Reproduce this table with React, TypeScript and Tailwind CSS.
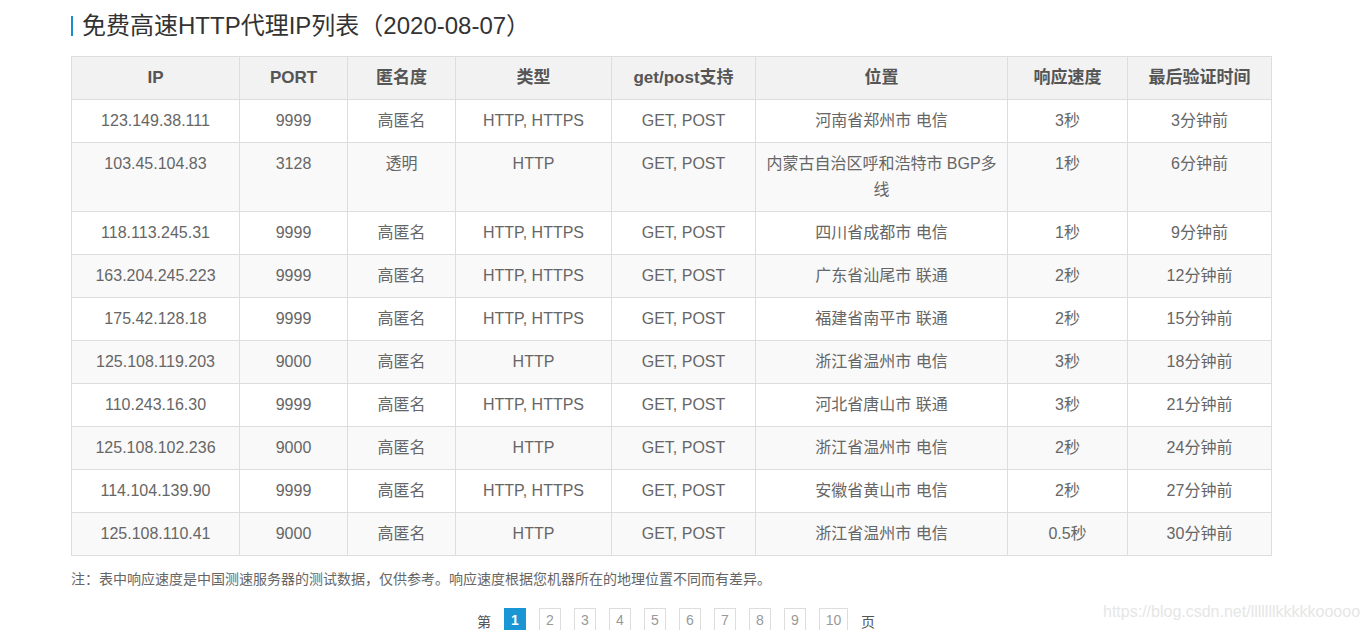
const rows = [
  ["123.149.38.111", "9999", "高匿名", "HTTP, HTTPS", "GET, POST", "河南省郑州市 电信", "3秒", "3分钟前"],
  ["103.45.104.83", "3128", "透明", "HTTP", "GET, POST", "内蒙古自治区呼和浩特市 BGP多线", "1秒", "6分钟前"],
  ["118.113.245.31", "9999", "高匿名", "HTTP, HTTPS", "GET, POST", "四川省成都市 电信", "1秒", "9分钟前"],
  ["163.204.245.223", "9999", "高匿名", "HTTP, HTTPS", "GET, POST", "广东省汕尾市 联通", "2秒", "12分钟前"],
  ["175.42.128.18", "9999", "高匿名", "HTTP, HTTPS", "GET, POST", "福建省南平市 联通", "2秒", "15分钟前"],
  ["125.108.119.203", "9000", "高匿名", "HTTP", "GET, POST", "浙江省温州市 电信", "3秒", "18分钟前"],
  ["110.243.16.30", "9999", "高匿名", "HTTP, HTTPS", "GET, POST", "河北省唐山市 联通", "3秒", "21分钟前"],
  ["125.108.102.236", "9000", "高匿名", "HTTP", "GET, POST", "浙江省温州市 电信", "2秒", "24分钟前"],
  ["114.104.139.90", "9999", "高匿名", "HTTP, HTTPS", "GET, POST", "安徽省黄山市 电信", "2秒", "27分钟前"],
  ["125.108.110.41", "9000", "高匿名", "HTTP", "GET, POST", "浙江省温州市 电信", "0.5秒", "30分钟前"],
];

const headers = ["IP", "PORT", "匿名度", "类型", "get/post支持", "位置", "响应速度", "最后验证时间"];
const widths = [168, 108, 108, 156, 144, 252, 120, 144];

const font = { fontFamily: '"Liberation Sans", Arial, "Noto Sans CJK SC", sans-serif' };

export default function App() {
  return (
    <div className="relative min-h-[630px] bg-white text-[#666]" style={font}>
      <div className="w-[1200px] ml-[71px] pt-[12px]">
        <h1 className="flex items-center h-[28px] text-[24px] leading-[28px] font-normal text-[#333]">
          <span className="w-[2px] h-[20px] bg-[#1a8ccc] mr-[9px]" />
          免费高速HTTP代理IP列表（2020-08-07）
        </h1>

        <table className="mt-[16px] w-[1200px] border-collapse table-fixed text-[16px]">
          <colgroup>
            {widths.map((w, i) => (
              <col key={i} style={{ width: w }} />
            ))}
          </colgroup>
          <thead>
            <tr className="bg-[#f2f2f2]">
              {headers.map((h) => (
                <th
                  key={h}
                  className="border border-[#ddd] h-[43px] px-2 text-center font-bold text-[17px] text-[#555]"
                >
                  {h}
                </th>
              ))}
            </tr>
          </thead>
          <tbody>
            {rows.map((r, i) => (
              <tr key={i} className={i % 2 === 1 ? "bg-[#f9f9f9]" : "bg-white"}>
                {r.map((c, j) => (
                  <td
                    key={j}
                    className="border border-[#ddd] px-2 py-[8px] leading-[26px] text-center align-top text-[#666]"
                  >
                    {c}
                  </td>
                ))}
              </tr>
            ))}
          </tbody>
        </table>

        <p className="mt-[15px] text-[14px] leading-[16px] text-[#666]">
          注：表中响应速度是中国测速服务器的测试数据，仅供参考。响应速度根据您机器所在的地理位置不同而有差异。
        </p>

        <div className="mt-[21px] flex items-start justify-center gap-[13px] text-[14px] pl-[10px]">
          <span className="leading-[22px] mt-[3px] text-[#555]">第</span>
          <span className="w-[22px] h-[24px] leading-[24px] text-center bg-[#1a96d4] text-white font-bold">1</span>
          {[2, 3, 4, 5, 6, 7, 8, 9].map((n) => (
            <span
              key={n}
              className="w-[22px] h-[24px] leading-[22px] text-center border border-[#ddd] text-[#999]"
            >
              {n}
            </span>
          ))}
          <span className="w-[29px] h-[24px] leading-[22px] text-center border border-[#ddd] text-[#999]">10</span>
          <span className="leading-[22px] mt-[3px] text-[#555]">页</span>
        </div>
      </div>

      <div className="absolute left-[1103px] top-[600px] text-[16px] text-[#e6e6e6]">
        https://blog.csdn.net/lllllllkkkkkooooo
      </div>
    </div>
  );
}
